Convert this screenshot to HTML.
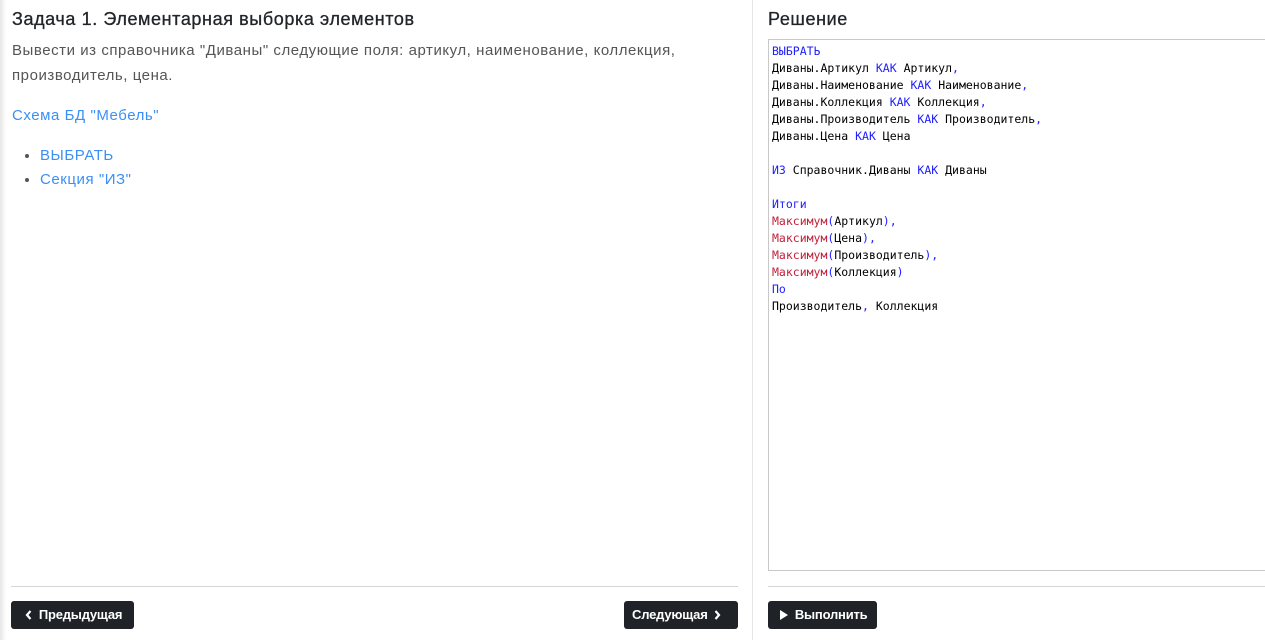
<!DOCTYPE html>
<html><head><meta charset="utf-8"><style>
*{box-sizing:border-box;margin:0;padding:0}
body{width:1265px;height:640px;background:#fff;font-family:"Liberation Sans","DejaVu Sans",sans-serif;position:relative;overflow:hidden;color:#212529}
.shade{position:absolute;left:0;top:0;width:6px;height:640px;background:linear-gradient(to right,#e6e6e6,#fff)}
h2{position:absolute;font-size:18px;font-weight:normal;color:#212529;letter-spacing:0.6px;-webkit-text-stroke:0.3px #212529;white-space:nowrap}
.p{position:absolute;left:12px;top:38px;font-size:15px;line-height:25px;color:#555;letter-spacing:0.55px}
a{color:#3b8ff5;text-decoration:none}
.link{position:absolute;left:12px;top:107px;font-size:15px;letter-spacing:0.55px}
ul{position:absolute;left:40px;top:144px;font-size:15px;line-height:24px;letter-spacing:0.55px}
li{color:#555}
.vl{position:absolute;left:752px;top:0;width:1px;height:640px;background:#e5e5e5}
.hr{position:absolute;top:586px;height:1px;background:#d5d5d5}
.code{position:absolute;left:768px;top:39px;width:510px;height:532px;border:1px solid #c8c8c8;padding:3px 0 0 3px;font-family:"DejaVu Sans Mono",monospace;font-size:11.5px;line-height:17px;white-space:pre;color:#000}
.k{color:#2020ff}.f{color:#c0203a}
.btn{position:absolute;top:601px;height:28px;background:#1f2328;color:#fff;border-radius:3px;font-size:13px;line-height:28px;font-weight:bold;padding:0 10px;letter-spacing:-0.2px;white-space:nowrap;overflow:hidden}
.btn svg{vertical-align:-1px}
</style></head><body>
<div class="shade"></div>
<h2 style="left:12px;top:9px">Задача 1. Элементарная выборка элементов</h2>
<div class="p">Вывести из справочника "Диваны" следующие поля: артикул, наименование, коллекция,<br>производитель, цена.</div>
<a class="link">Схема БД "Мебель"</a>
<ul><li><a>ВЫБРАТЬ</a></li><li><a>Секция "ИЗ"</a></li></ul>
<div class="hr" style="left:11px;width:727px"></div>
<div class="btn" style="left:11px;width:123px;padding-left:14px"><svg width="7" height="10" viewBox="0 0 7 10"><path d="M5.5 1L2 5l3.5 4" stroke="#fff" stroke-width="2.2" fill="none"/></svg>&nbsp; Предыдущая</div>
<div class="btn" style="left:624px;width:114px;padding-left:8px">Следующая&nbsp; <svg width="7" height="10" viewBox="0 0 7 10"><path d="M1.5 1L5 5l-3.5 4" stroke="#fff" stroke-width="2.2" fill="none"/></svg></div>
<div class="vl"></div>
<h2 style="left:768px;top:9px">Решение</h2>
<div class="code"><span class="k">ВЫБРАТЬ</span>
Диваны.Артикул <span class="k">КАК</span> Артикул<span class="k">,</span>
Диваны.Наименование <span class="k">КАК</span> Наименование<span class="k">,</span>
Диваны.Коллекция <span class="k">КАК</span> Коллекция<span class="k">,</span>
Диваны.Производитель <span class="k">КАК</span> Производитель<span class="k">,</span>
Диваны.Цена <span class="k">КАК</span> Цена

<span class="k">ИЗ</span> Справочник.Диваны <span class="k">КАК</span> Диваны

<span class="k">Итоги</span>
<span class="f">Максимум</span><span class="k">(</span>Артикул<span class="k">),</span>
<span class="f">Максимум</span><span class="k">(</span>Цена<span class="k">),</span>
<span class="f">Максимум</span><span class="k">(</span>Производитель<span class="k">),</span>
<span class="f">Максимум</span><span class="k">(</span>Коллекция<span class="k">)</span>
<span class="k">По</span>
Производитель<span class="k">,</span> Коллекция</div>
<div class="hr" style="left:768px;width:497px"></div>
<div class="btn" style="left:768px;width:109px;padding-left:12px"><svg width="8" height="10" viewBox="0 0 8 10"><path d="M0 0L8 5 0 10z" fill="#fff"/></svg>&nbsp; Выполнить</div>
</body></html>
